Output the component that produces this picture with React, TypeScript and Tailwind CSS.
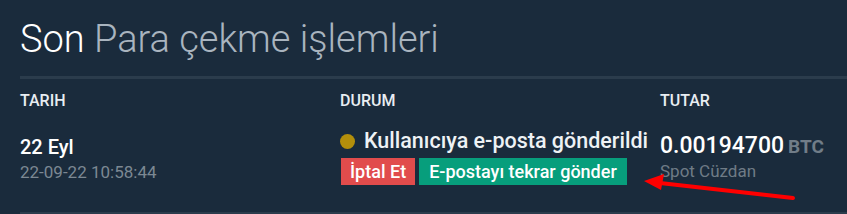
export default function App() {
  return (
    <div className="h-[214px] w-[847px] overflow-hidden bg-[#1a2b3c] font-['Roboto',sans-serif] relative">
      <div className="pl-5">
        <h2 className="pt-4 pb-[14px] text-[38px] font-light leading-[46px] text-[#a9b4bf]">
          <span className="text-white">Son</span> Para çekme işlemleri
        </h2>
        <div className="h-[3px] bg-[#2b3c4c]" />
        <div className="grid grid-cols-[320px_320px_1fr] pt-3">
          <div className="text-[16px] font-medium leading-[20px] text-[#e8edf2]">TARIH</div>
          <div className="text-[16px] font-medium leading-[20px] text-[#e8edf2]">DURUM</div>
          <div className="text-[16px] font-medium leading-[20px] text-[#e8edf2]">TUTAR</div>
        </div>
        <div className="grid h-[101px] grid-cols-[320px_320px_1fr] items-start">
          <div className="pt-6">
            <div className="text-[20px] font-medium leading-[24px] text-white">22 Eyl</div>
            <div className="mt-[2px] text-[17px] leading-[22px] text-[#7c8893]">22-09-22 10:58:44</div>
          </div>
          <div className="pt-[17px]">
            <div className="flex items-center gap-[9px] leading-[26px]">
              <span className="h-[15px] w-[15px] rounded-full bg-[#b38f0b]" />
              <span className="text-[21.5px] font-medium text-[#eef2f5]">Kullanıcıya e-posta gönderildi</span>
            </div>
            <div className="mt-1 flex gap-[4px] pl-px">
              <span className="bg-[#e14c4c] px-[9px] text-[18px] font-medium leading-[27px] text-white">İptal Et</span>
              <span className="bg-[#079e7c] px-[10px] text-[18px] font-medium leading-[27px] text-white">E-postayı tekrar gönder</span>
            </div>
          </div>
          <div className="pt-[23px]">
            <div className="leading-[24px] text-white">
              <span className="text-[23px] font-medium">0.00194700</span>{" "}
              <span className="text-[19px] font-bold text-[#717d88]">BTC</span>
            </div>
            <div className="text-[17px] leading-[22px] text-[#6f7b86]">Spot Cüzdan</div>
          </div>
        </div>
        <div className="h-[2px] bg-[#2b3c4c]" />
      </div>
      <svg className="absolute left-0 top-0" width="847" height="214" viewBox="0 0 847 214">
        <line x1="793" y1="198" x2="660" y2="183" stroke="#ff0000" strokeWidth="4" strokeLinecap="round" />
        <polygon points="644,181 664,174 661,190" fill="#ff0000" />
      </svg>
    </div>
  );
}
